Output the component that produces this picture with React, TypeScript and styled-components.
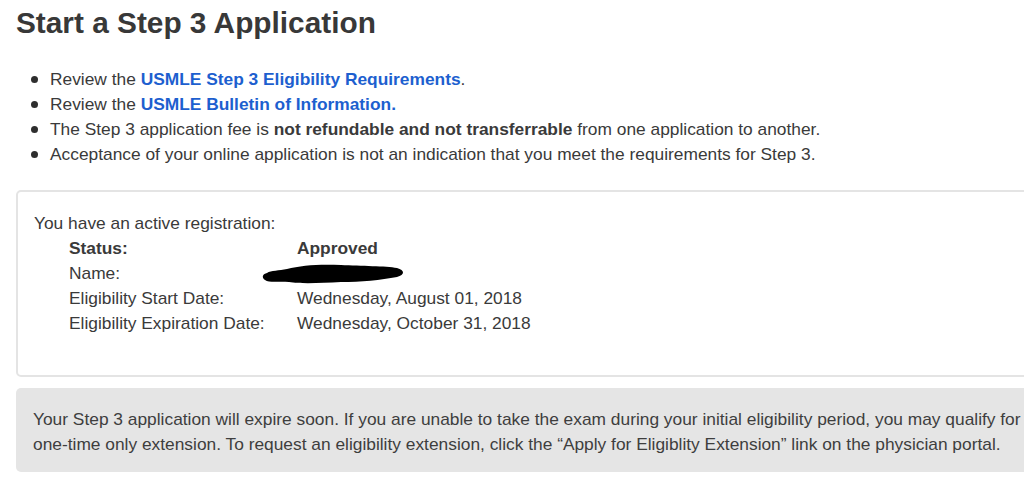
import React from "react";
import styled, { createGlobalStyle } from "styled-components";

const Global = createGlobalStyle`
  html, body { margin: 0; padding: 0; background: #fff; overflow: hidden; }
  body { font-family: "Liberation Sans", Arial, Helvetica, sans-serif; color: #3a3a3a; }
`;

const Page = styled.div`
  width: 1072px;
  padding: 5px 0 0 16px;
`;

const Title = styled.h1`
  margin: 0;
  font-size: 29.8px;
  line-height: 36px;
  font-weight: 700;
  color: #383838;
`;

const List = styled.ul`
  margin: 26px 0 0 0;
  padding: 0 0 0 34px;
  list-style: none;
  font-size: 17.35px;
  line-height: 25px;
`;

const Item = styled.li`
  position: relative;
  color: #3a3a3a;
  &::before {
    content: "";
    position: absolute;
    left: -19px;
    top: 9px;
    width: 7px;
    height: 7px;
    border-radius: 50%;
    background: #2e2e2e;
  }
`;

const Link = styled.a`
  color: #1d5fcf;
  font-weight: 700;
  text-decoration: none;
`;

const Card = styled.div`
  margin-top: 23px;
  border: 2px solid #e4e4e4;
  border-radius: 5px;
  padding: 19px 16px 39px 16px;
  font-size: 17.35px;
  line-height: 25px;
`;

const Grid = styled.div`
  display: grid;
  grid-template-columns: 228px auto;
  padding-left: 35px;
`;

const Cell = styled.div<{ $bold?: boolean }>`
  font-weight: ${(p) => (p.$bold ? 700 : 400)};
  height: 25px;
  position: relative;
`;

const Redact = styled.svg`
  position: absolute;
  left: -36px;
  top: 2px;
`;

const Alert = styled.div`
  margin-top: 11px;
  background: #e5e5e5;
  border-radius: 5px;
  padding: 19px 17px 15px 17px;
  font-size: 17.35px;
  line-height: 25px;
  color: #3e3e3e;
`;

export default function App() {
  return (
    <>
      <Global />
      <Page>
        <Title>Start a Step 3 Application</Title>
        <List>
          <Item>
            Review the <Link>USMLE Step 3 Eligibility Requirements</Link>.
          </Item>
          <Item>
            Review the <Link>USMLE Bulletin of Information.</Link>
          </Item>
          <Item>
            The Step 3 application fee is <b>not refundable and not transferrable</b> from one
            application to another.
          </Item>
          <Item>
            Acceptance of your online application is not an indication that you meet the
            requirements for Step 3.
          </Item>
        </List>
        <Card>
          <div>You have an active registration:</div>
          <Grid>
            <Cell $bold>Status:</Cell>
            <Cell $bold>Approved</Cell>
            <Cell>Name:</Cell>
            <Cell>
              <Redact width="145" height="24" viewBox="0 0 145 24">
                <path
                  d="M6 10 C10 7 18 8 26 6 C40 2 60 1 80 2 C100 3 125 3 136 5 C144 7 144 12 136 14 C120 17 100 19 80 19 C60 20 40 21 28 19 C18 18 8 20 4 17 C0 14 2 11 6 10 Z"
                  fill="#000"
                />
              </Redact>
            </Cell>
            <Cell>Eligibility Start Date:</Cell>
            <Cell>Wednesday, August 01, 2018</Cell>
            <Cell>Eligibility Expiration Date:</Cell>
            <Cell>Wednesday, October 31, 2018</Cell>
          </Grid>
        </Card>
        <Alert>
          Your Step 3 application will expire soon. If you are unable to take the exam during your
          initial eligibility period, you may qualify for a one-time only extension. To request an
          eligibility extension, click the “Apply for Eligiblity Extension” link on the physician
          portal.
        </Alert>
      </Page>
    </>
  );
}
